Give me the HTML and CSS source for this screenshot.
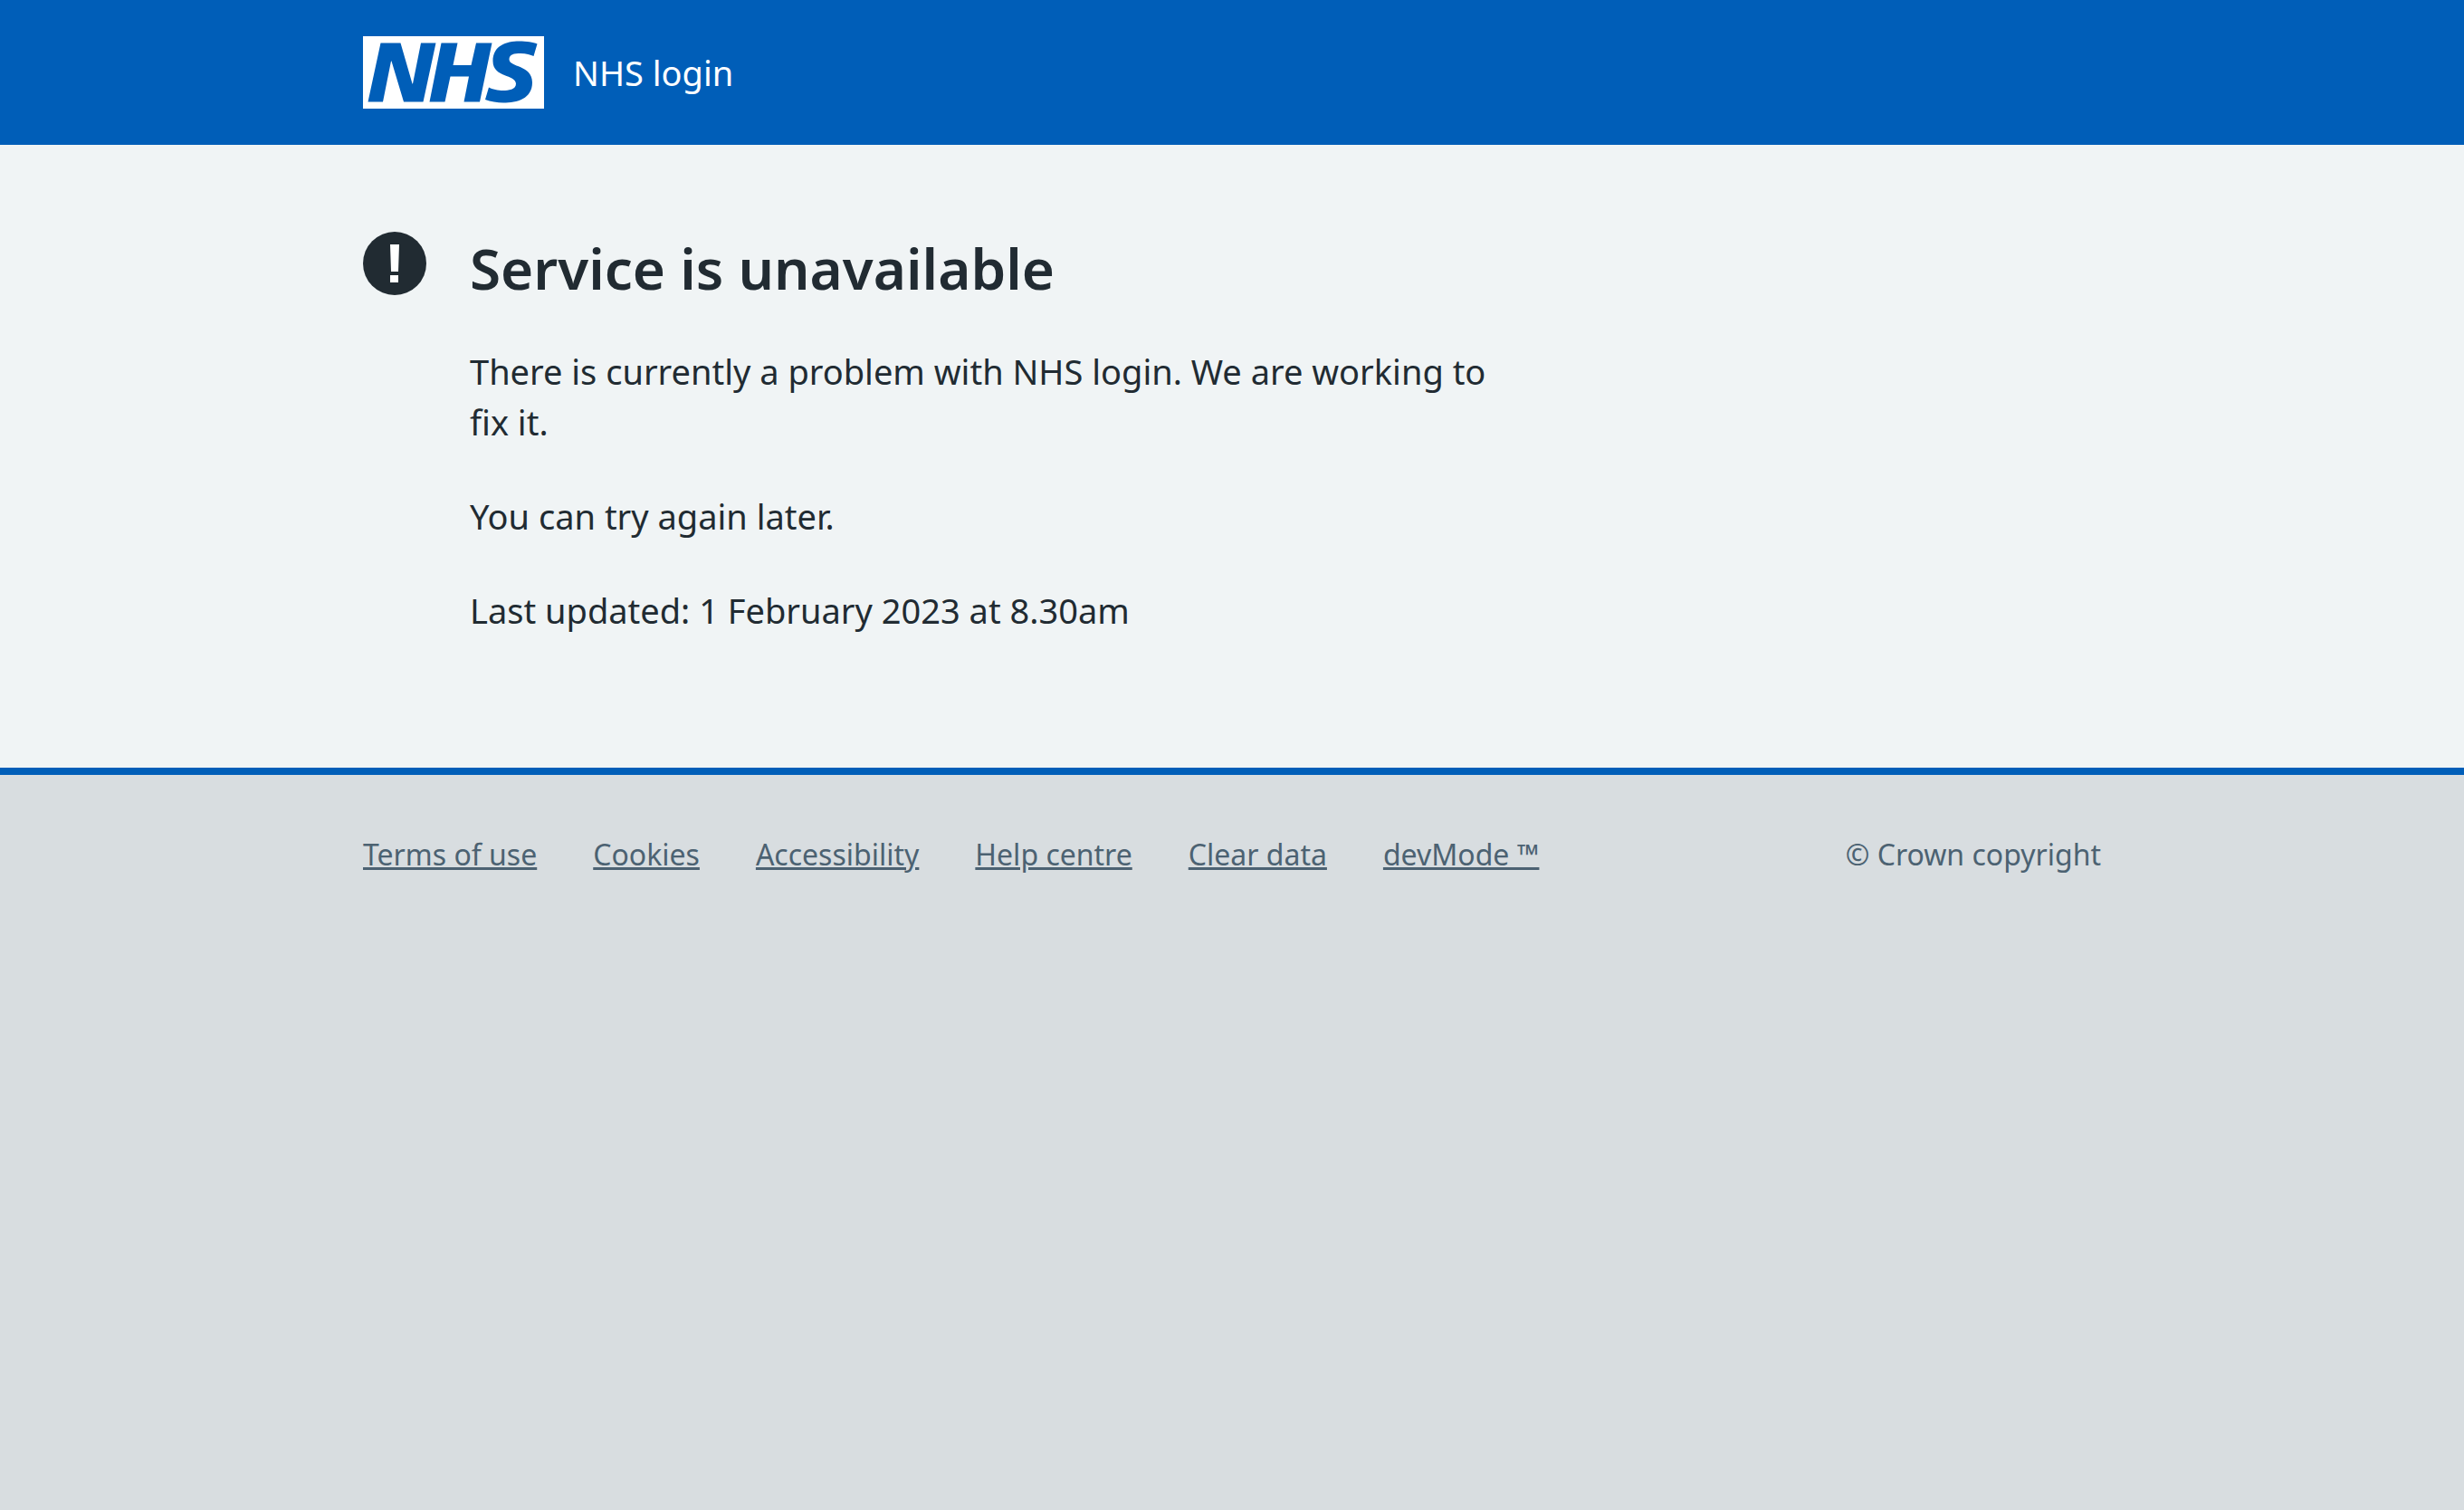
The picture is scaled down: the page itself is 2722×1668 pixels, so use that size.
FILE: index.html
```html
<!DOCTYPE html>
<html lang="en">
<head>
<meta charset="utf-8">
<meta name="viewport" content="width=device-width, initial-scale=1">
<title>Service is unavailable - NHS login</title>
<link rel="stylesheet" href="styles.css">
</head>
<body>
<header class="header">
  <div class="container header-inner">
    <svg class="logo" viewBox="0 0 40 16" role="img" aria-label="NHS">
      <path fill="#fff" d="M0 0h40v16H0z"/>
      <path fill="#005eb8" d="M3.9 1.5h4.4l2.6 9h.1l1.8-9h3.3l-2.8 13H9l-2.7-9h-.1l-1.8 9H1.1M17.3 1.5h3.6l-1 4.9h4L25 1.5h3.5l-2.7 13h-3.5l1.1-5.6h-4.1l-1.2 5.6h-3.4M37.7 4.4c-.7-.3-1.6-.6-2.9-.6-1.4 0-2.5.2-2.5 1.3 0 1.8 5.1 1.2 5.1 5.1 0 3.6-3.3 4.5-6.4 4.5-1.3 0-2.9-.3-4-.7l.8-2.7c.7.4 2.1.7 3.2.7s2.8-.2 2.8-1.5c0-2.1-5.1-1.3-5.1-5 0-3.4 2.9-4.4 5.8-4.4 1.6 0 3.1.2 4 .6"/>
    </svg>
    <span class="service-name">NHS login</span>
  </div>
</header>
<main class="main">
  <div class="container message">
    <svg class="alert-icon" viewBox="0 0 70 70" aria-hidden="true">
      <circle cx="35" cy="35" r="35" fill="#212b32"/>
      <path fill="#fff" d="M30 14h10l-1 30h-8zM30 48h9v8h-9z"/>
    </svg>
    <div class="message-body">
      <h1 class="heading">Service is unavailable</h1>
      <p class="text">There is currently a problem with NHS login. We are working to fix it.</p>
      <p class="text">You can try again later.</p>
      <p class="text">Last updated: 1 February 2023 at 8.30am</p>
    </div>
  </div>
</main>
<footer class="footer">
  <div class="container footer-inner">
    <ul class="footer-links">
      <li><a href="#terms">Terms of use</a></li>
      <li><a href="#cookies">Cookies</a></li>
      <li><a href="#accessibility">Accessibility</a></li>
      <li><a href="#help">Help centre</a></li>
      <li><a href="#clear">Clear data</a></li>
      <li><a href="#devmode">devMode ™</a></li>
    </ul>
    <p class="copyright">© Crown copyright</p>
  </div>
</footer>
</body>
</html>
```
FILE: styles.css
```css
* {
  box-sizing: border-box;
}

body {
  margin: 0;
  background: #d8dde0;
  color: #212b32;
  font-family: "Noto Sans", "Open Sans", sans-serif;
  font-size: 38px;
  line-height: 56px;
}

.container {
  max-width: 1984px;
  margin: 0 auto;
  padding: 0 32px;
}

.header {
  background: #005eb8;
  color: #fff;
}

.header-inner {
  display: flex;
  align-items: center;
  gap: 32px;
  padding-top: 40px;
  padding-bottom: 40px;
}

.logo {
  flex: none;
  width: 200px;
  height: 80px;
}

.service-name {
  font-size: 38px;
}

.main {
  background: #f0f4f5;
  padding: 96px 0 146px;
}

.message {
  display: flex;
  align-items: flex-start;
  gap: 48px;
}

.alert-icon {
  flex: none;
  width: 70px;
  height: 70px;
}

.message-body {
  max-width: 1160px;
}

.heading {
  margin: 0 0 46px;
  font-size: 62px;
  line-height: 80px;
  font-weight: 600;
}

.text {
  margin: 0 0 48px;
}

.text:last-child {
  margin-bottom: 0;
}

.footer {
  border-top: 8px solid #005eb8;
  padding: 64px 0;
  color: #4c6272;
  font-size: 32px;
  line-height: 48px;
}

.footer-inner {
  display: flex;
  justify-content: space-between;
  gap: 64px;
}

.footer-links {
  display: flex;
  flex-wrap: wrap;
  column-gap: 62px;
  margin: 0;
  padding: 0;
  list-style: none;
}

.footer-links a {
  color: inherit;
  text-decoration-thickness: 3px;
}

.copyright {
  margin: 0;
  white-space: nowrap;
}
```
